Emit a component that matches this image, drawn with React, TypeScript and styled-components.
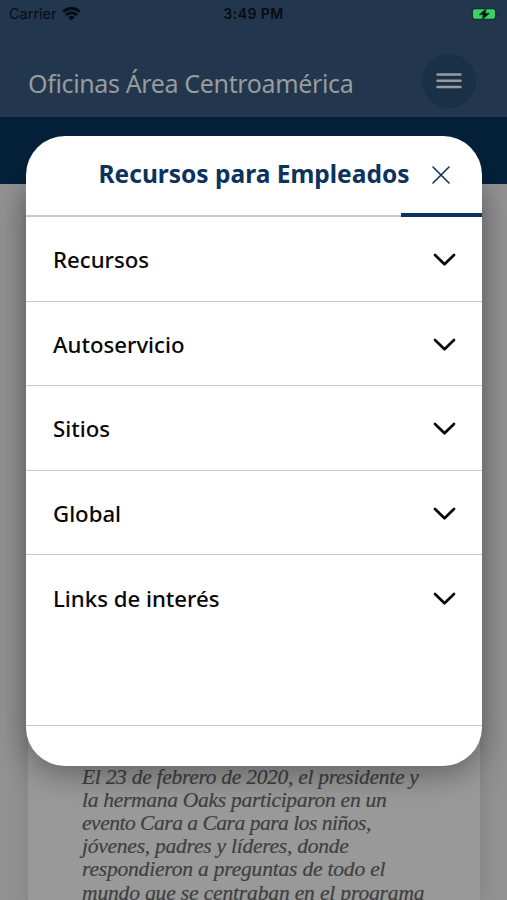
import React from "react";
import styled, { createGlobalStyle } from "styled-components";

const GlobalStyle = createGlobalStyle`
  * { box-sizing: border-box; }
  body { margin: 0; overflow: hidden; font-family: "Noto Sans", "Open Sans", sans-serif; }
  button { font: inherit; color: inherit; border: 0; padding: 0; background: none; }
`;

const Screen = styled.div`
  position: relative;
  width: 507px;
  height: 900px;
  overflow: hidden;
  background: #929292;
  display: flex;
  flex-direction: column;
`;

const Header = styled.header`
  height: 117px;
  flex: none;
  background: #22364d;
`;

const StatusBar = styled.div`
  height: 28px;
  padding: 0 9px 0 9px;
  display: grid;
  grid-template-columns: 1fr auto 1fr;
  align-items: center;
  font: 14.5px/28px Inter, sans-serif;
  color: #070c12;
`;

const Carrier = styled.div`
  display: flex;
  align-items: center;
  gap: 5px;
`;

const Clock = styled.div`
  font-size: 14px;
  font-weight: 600;
  letter-spacing: 0.45px;
`;

const BatteryIcon = styled.svg`
  justify-self: end;
  margin-right: -2px;
`;

const TitleRow = styled.div`
  height: 89px;
  padding: 0 31px 0 28px;
  display: flex;
  justify-content: space-between;
  align-items: flex-start;
`;

const PageTitle = styled.h1`
  margin: 37px 0 0;
  font-size: 25px;
  line-height: 36px;
  font-weight: 400;
  letter-spacing: -0.36px;
  color: #969c9e;
  white-space: nowrap;
`;

const MenuButton = styled.button`
  width: 54px;
  height: 54px;
  margin-top: 26px;
  border-radius: 50%;
  background: #1a3047;
  color: #999b9f;
  display: grid;
  place-items: center;
`;

const Band = styled.div`
  height: 67px;
  flex: none;
  background: #042039;
`;

const Article = styled.article`
  flex: 1;
  margin: 0 27px 0 28px;
  padding: 581.6px 0 0 54px;
  background: #999;
  box-shadow: 0 0 22px rgba(0, 0, 0, 0.13);
`;

const ArticleLine = styled.div<{ $spacing: number }>`
  font: italic 21.5px/23.2px "Liberation Serif", serif;
  letter-spacing: ${(p) => p.$spacing}px;
  color: #3f3f3f;
  -webkit-text-stroke: 0.2px #3f3f3f;
  white-space: nowrap;
  width: max-content;
`;

const Modal = styled.section`
  position: absolute;
  left: 26px;
  top: 135.5px;
  width: 455.5px;
  height: 630px;
  border-radius: 39px;
  overflow: hidden;
  background: #fff;
  display: flex;
  flex-direction: column;
`;

const ModalShadow = styled.div`
  position: absolute;
  left: 26px;
  top: 184px;
  width: 455.5px;
  height: 581.5px;
  border-radius: 0 0 39px 39px;
  box-shadow: 0 8px 32px rgba(0, 0, 0, 0.36);
  clip-path: inset(0 -60px -80px -60px);
`;

const ModalHeader = styled.div`
  height: 81.5px;
  flex: none;
  padding-right: 31px;
  display: flex;
  justify-content: flex-end;
  gap: 21px;
  background:
    linear-gradient(#0b335d, #0b335d) right bottom / 81px 4px no-repeat,
    linear-gradient(#c9c9c9, #c9c9c9) left bottom / 100% 2px no-repeat;
`;

const ModalTitle = styled.h2`
  margin: 20px 0 0;
  font-size: 24.5px;
  line-height: 36px;
  font-weight: 700;
  color: #0b335d;
  white-space: nowrap;
`;

const CloseButton = styled.button`
  width: 20px;
  height: 20px;
  margin-top: 29.5px;
  color: #0b335d;
`;

const Row = styled.button<{ $last?: boolean }>`
  height: 84.5px;
  flex: none;
  padding: 3px 26px 0 27px;
  display: flex;
  align-items: center;
  justify-content: space-between;
  border-bottom: ${(p) => (p.$last ? "0" : "1px solid #c9c9c9")};
  font-size: 22.2px;
  font-weight: 500;
  line-height: 32px;
  color: #080808;
`;

const Footer = styled.footer`
  height: 41px;
  margin-top: auto;
  border-top: 1px solid #c8c8c8;
`;

const sections = ["Recursos", "Autoservicio", "Sitios", "Global", "Links de interés"];

const article = [
  { text: "El 23 de febrero de 2020, el presidente y", spacing: -0.28 },
  { text: "la hermana Oaks participaron en un", spacing: -0.28 },
  { text: "evento Cara a Cara para los niños,", spacing: -0.48 },
  { text: "jóvenes, padres y líderes, donde", spacing: -0.24 },
  { text: "respondieron a preguntas de todo el", spacing: -0.19 },
  { text: "mundo que se centraban en el programa", spacing: -0.15 },
];

const Wifi = () => (
  <svg width="19" height="15" viewBox="0 0 19 15" fill="none" stroke="currentColor" strokeWidth="2.8">
    <path d="M1.2 4.7a12 12 0 0 1 16.6 0M4 8.1a7.6 7.6 0 0 1 11 0" />
    <path d="M6.2 10.3a4.6 4.6 0 0 1 6.6 0L9.5 13.5z" fill="currentColor" stroke="none" />
  </svg>
);

const Battery = () => (
  <BatteryIcon width="29" height="14" viewBox="0 0 29 14">
    <rect x="0.5" y="0.7" width="25" height="12.6" rx="3.6" fill="#172c3c" />
    <rect x="2" y="2.2" width="22" height="9.6" rx="2" fill="#3bd063" />
    <path d="M27 5v4c1-.4 1.6-1.1 1.6-2S28 5.4 27 5z" fill="#15283a" />
    <path d="M15.5 1.2 8 7.8h4.2L10.8 13l8-6.8h-4.5z" fill="#07170f" stroke="#174b37" strokeWidth=".6" />
  </BatteryIcon>
);

const Chevron = () => (
  <svg width="23" height="14" viewBox="0 0 23 14" fill="none" stroke="#080808" strokeWidth="2.7" strokeLinecap="round" strokeLinejoin="round">
    <path d="M2 2l9.5 9.3L21 2" />
  </svg>
);

export default function App() {
  return (
    <>
      <GlobalStyle />
      <Screen>
        <Header>
          <StatusBar>
            <Carrier>Carrier<Wifi /></Carrier>
            <Clock>3:49 PM</Clock>
            <Battery />
          </StatusBar>
          <TitleRow>
            <PageTitle>Oficinas Área Centroamérica</PageTitle>
            <MenuButton aria-label="Menú">
              <svg width="26" height="18" viewBox="0 0 26 18" stroke="currentColor" strokeWidth="2.5" strokeLinecap="round">
                <path d="M1.5 2.5h23M1.5 8.8h23M1.5 15h23" />
              </svg>
            </MenuButton>
          </TitleRow>
        </Header>
        <Band />
        <Article>
          {article.map((line) => (
            <ArticleLine key={line.text} $spacing={line.spacing}>{line.text}</ArticleLine>
          ))}
        </Article>
        <ModalShadow />
        <Modal>
          <ModalHeader>
            <ModalTitle>Recursos para Empleados</ModalTitle>
            <CloseButton aria-label="Cerrar">
              <svg width="20" height="20" viewBox="0 0 20 20" fill="none" stroke="currentColor" strokeWidth="1.6" strokeLinecap="round">
                <path d="M2 2l16 16M18 2L2 18" />
              </svg>
            </CloseButton>
          </ModalHeader>
          {sections.map((name, i) => (
            <Row key={name} $last={i === sections.length - 1}>
              <span>{name}</span>
              <Chevron />
            </Row>
          ))}
          <Footer />
        </Modal>
      </Screen>
    </>
  );
}
